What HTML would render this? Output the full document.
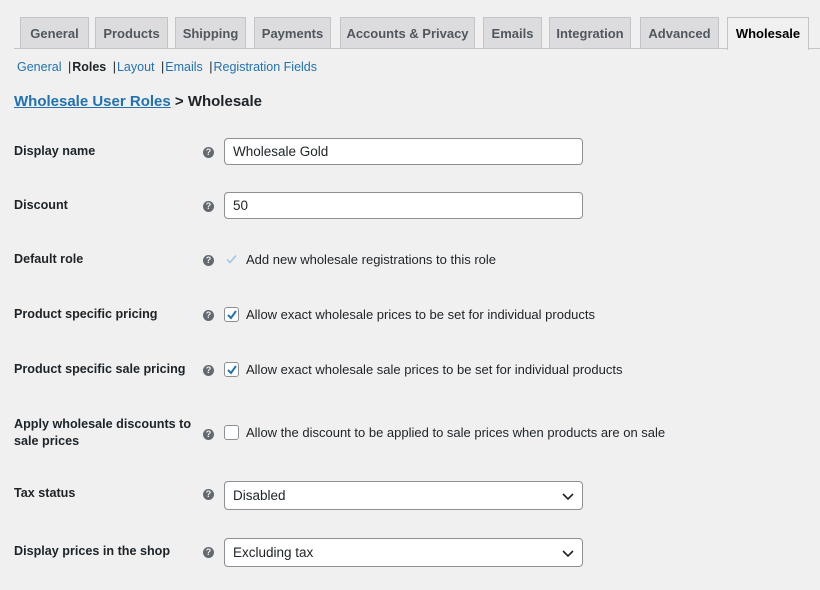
<!DOCTYPE html><html><head><style>
body{margin:0;width:820px;height:590px;background:#f0f0f1;font-family:"Liberation Sans",sans-serif;color:#1d2327;position:relative;overflow:hidden}
.a{position:absolute}
.tab{position:absolute;top:17px;height:31px;background:#dcdcde;border:1px solid #c3c4c7;border-bottom:none;font-size:13px;font-weight:bold;color:#50575e;text-align:center;line-height:32px;box-sizing:border-box}
.tab.act{background:#f0f0f1;color:#000;height:33px}
.line{position:absolute;left:14px;right:0;top:48px;border-top:1px solid #c3c4c7}
.sub{top:60px;left:17px;font-size:12.5px;color:#2271b1}
.sub i{font-style:normal;color:#1d2327;margin-left:3px;margin-right:1px}
.lbl{position:absolute;left:14px;font-size:12.6px;font-weight:bold;line-height:17px}
.q{position:absolute;left:203px;width:11px;height:11px;border-radius:50%;background:#646970;color:#f0f0f1;font-size:9px;font-weight:bold;text-align:center;line-height:11px}
.in{position:absolute;left:224px;width:359px;height:27px;background:#fff;border:1px solid #8c8f94;border-radius:4px;box-sizing:border-box;font-size:13.5px;line-height:25px;padding-left:8px}
.cb{position:absolute;left:224px;width:15px;height:15px;border:1px solid #8c8f94;border-radius:3px;background:#fff;box-sizing:border-box}
.t{position:absolute;left:246px;font-size:13px}
.chev{position:absolute;right:8px;top:9px}
</style></head><body>
<div class="line"></div>
<div class="tab" style="left:20px;width:69px">General</div>
<div class="tab" style="left:95px;width:73px">Products</div>
<div class="tab" style="left:175px;width:71px">Shipping</div>
<div class="tab" style="left:254px;width:77px">Payments</div>
<div class="tab" style="left:340px;width:135px">Accounts &amp; Privacy</div>
<div class="tab" style="left:483px;width:59px">Emails</div>
<div class="tab" style="left:549px;width:82px">Integration</div>
<div class="tab" style="left:640px;width:79px">Advanced</div>
<div class="tab act" style="left:727px;width:82px">Wholesale</div>
<div class="a sub">General <i>|</i><b style="color:#1d2327">Roles</b> <i>|</i>Layout <i>|</i>Emails <i>|</i>Registration Fields</div>
<div class="a" style="left:14px;top:93px;font-size:15px;font-weight:bold"><span style="color:#2271b1;text-decoration:underline">Wholesale User Roles</span> &gt; Wholesale</div>

<div class="lbl" style="top:143px">Display name</div><div class="q" style="top:147px">?</div><div class="in" style="top:138px">Wholesale Gold</div>
<div class="lbl" style="top:197px">Discount</div><div class="q" style="top:201px">?</div><div class="in" style="top:192px">50</div>
<div class="lbl" style="top:251px">Default role</div><div class="q" style="top:255px">?</div>
<svg class="a" style="left:225px;top:253px" width="13" height="12" viewBox="0 0 13 12"><path d="M2 6.5l3 3 6-7" fill="none" stroke="#9ec2e6" stroke-width="1.5"/></svg><div class="t" style="top:252px">Add new wholesale registrations to this role</div>
<div class="lbl" style="top:306px">Product specific pricing</div><div class="q" style="top:310px">?</div>
<div class="cb" style="top:307px"><svg class="a" style="left:1px;top:1px" width="12" height="11" viewBox="0 0 12 11"><path d="M2 6l3 3 5-7" fill="none" stroke="#2271b1" stroke-width="2"/></svg></div><div class="t" style="top:307px">Allow exact wholesale prices to be set for individual products</div>
<div class="lbl" style="top:361px">Product specific sale pricing</div><div class="q" style="top:365px">?</div>
<div class="cb" style="top:362px"><svg class="a" style="left:1px;top:1px" width="12" height="11" viewBox="0 0 12 11"><path d="M2 6l3 3 5-7" fill="none" stroke="#2271b1" stroke-width="2"/></svg></div><div class="t" style="top:362px">Allow exact wholesale sale prices to be set for individual products</div>
<div class="lbl" style="top:416px">Apply wholesale discounts to<br>sale prices</div><div class="q" style="top:429px">?</div>
<div class="cb" style="top:425px"></div><div class="t" style="top:425px">Allow the discount to be applied to sale prices when products are on sale</div>
<div class="lbl" style="top:485px">Tax status</div><div class="q" style="top:489px">?</div><div class="in" style="top:481px;height:29px;line-height:27px">Disabled<svg class="chev" width="12" height="10" viewBox="0 0 12 10"><path d="M1 3l5 5 5-5" fill="none" stroke="#1d2327" stroke-width="1.6"/></svg></div>
<div class="lbl" style="top:543px">Display prices in the shop</div><div class="q" style="top:547px">?</div><div class="in" style="top:538px;height:29px;line-height:27px">Excluding tax<svg class="chev" width="12" height="10" viewBox="0 0 12 10"><path d="M1 3l5 5 5-5" fill="none" stroke="#1d2327" stroke-width="1.6"/></svg></div>
</body></html>
